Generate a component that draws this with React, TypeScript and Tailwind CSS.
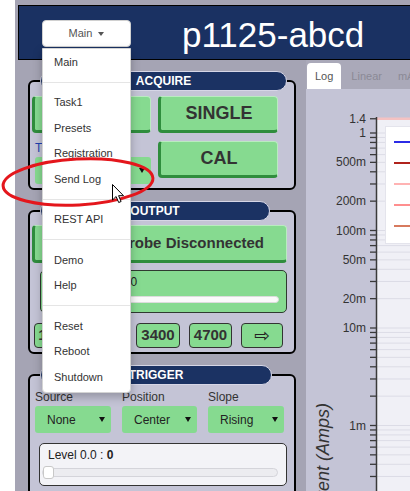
import React from "react";

function BigBtn({ children, className }: { children?: React.ReactNode; className?: string }) {
  return (
    <div
      className={`flex items-center justify-center rounded-[4px] border border-[#b9ecc0] border-l-[3px] border-b-[3px] border-l-[#2f8d3d] border-b-[#2f8d3d] bg-[#86da90] font-bold text-[#333] ${className ?? ""}`}
    >
      {children}
    </div>
  );
}

function TitleTab({ label, w }: { label: string; w: string }) {
  return (
    <div
      className={`absolute left-[10px] top-[-11px] flex h-[20px] items-center justify-center rounded-full border border-[#d6d6e6] bg-[#1b3263] text-[12px] font-bold text-white ${w}`}
    >
      {label}
    </div>
  );
}

function Caret() {
  return <span className="inline-block h-0 w-0 border-x-[3px] border-t-[5px] border-x-transparent border-t-[#111]" />;
}

function Select({ value, className }: { value: string; className?: string }) {
  return (
    <div
      className={`flex h-[27px] items-center justify-between rounded-[3px] bg-[#86da90] pl-[12px] pr-[6px] text-[12px] text-[#222] ${className ?? ""}`}
    >
      <span>{value}</span>
      <Caret />
    </div>
  );
}

function Chart() {
  const y = (v: number) => 44 - 97.5 * Math.log10(v);
  const ticks: number[] = [1.4, 1];
  for (const e of [-1, -2, -3, -4]) {
    for (let m = 9; m >= 1; m--) ticks.push(m * Math.pow(10, e));
  }
  const vis = ticks.filter((v) => y(v) <= 402);
  const labels: [number, string][] = [
    [1.4, "1.4"],
    [1, "1"],
    [0.5, "500m"],
    [0.2, "200m"],
    [0.1, "100m"],
    [0.05, "50m"],
    [0.02, "20m"],
    [0.01, "10m"],
    [0.001, "1m"],
  ];
  const legend = ["#2b2be6", "#b0231c", "#ffb3b3", "#ff8f8f", "#d77a5e"];
  return (
    <svg width={104} height={402} viewBox="0 0 104 402" className="block">
      <rect x={71} y={29} width={40} height={380} fill="#f0f0f6" />
      {vis.map((v, i) => (
        <line key={"g" + i} x1={71} x2={104} y1={y(v)} y2={y(v)} stroke="#dcdce6" strokeWidth={1} />
      ))}
      <line x1={71} x2={104} y1={y(1.4)} y2={y(1.4)} stroke="#f4c2c2" strokeWidth={2.5} />
      <rect x={79.5} y={37.5} width={30} height={117} fill="#ffffff" stroke="#e4e4ec" strokeWidth={1} />
      {legend.map((c, i) => (
        <line key={"l" + i} x1={88} x2={104} y1={53 + i * 21} y2={53 + i * 21} stroke={c} strokeWidth={2} />
      ))}
      <line x1={70.5} x2={70.5} y1={28} y2={402} stroke="#3a3a3a" strokeWidth={1.5} />
      {vis.map((v, i) => (
        <line key={"t" + i} x1={64} x2={71} y1={y(v)} y2={y(v)} stroke="#3a3a3a" strokeWidth={1.3} />
      ))}
      {labels.map(([v, t]) => (
        <text
          key={t}
          x={60}
          y={y(v)}
          textAnchor="end"
          dominantBaseline="central"
          fontSize={12}
          fill="#333"
          fontFamily="Liberation Sans, Arial, sans-serif"
        >
          {t}
        </text>
      ))}
      <text
        x={0}
        y={0}
        transform="translate(23 375.5) rotate(-90)"
        textAnchor="middle"
        fontSize={18}
        fontStyle="italic"
        fill="#333"
        fontFamily="Liberation Sans, Arial, sans-serif"
      >
        Current (Amps)
      </text>
    </svg>
  );
}

const menuGroups: string[][] = [
  ["Main"],
  ["Task1", "Presets", "Registration", "Send Log"],
  ["REST API"],
  ["Demo", "Help"],
  ["Reset", "Reboot", "Shutdown"],
];

export default function App() {
  return (
    <div className="relative flex h-[491px] w-[410px] overflow-hidden bg-white font-['Liberation_Sans',Arial,sans-serif]">
      <div className="w-[15px] shrink-0 bg-white" />
      <div className="flex min-w-0 flex-1 flex-col bg-[#a5a4b4] pt-[5px]">
        {/* header */}
        <div className="ml-[3px] flex h-[55px] w-[400px] shrink-0 items-start border border-black bg-[#1a3162]">
          <div className="ml-[23px] mt-[14px] flex h-[27px] w-[89px] items-center justify-center gap-[6px] rounded-[4px] border border-[#d0d0d0] bg-white text-[11px] text-[#555]">
            <span>Main</span>
            <span className="inline-block h-0 w-0 border-x-[3px] border-t-[4px] border-x-transparent border-t-[#555]" />
          </div>
          <div className="ml-[51px] mt-[11px] text-[35px] leading-[35px] text-white">p1125-abcd</div>
        </div>

        <div className="flex min-h-0 flex-1">
          {/* left column */}
          <div className="w-[285px] shrink-0 pl-[13px]">
            {/* ACQUIRE */}
            <div className="relative mt-[20px] h-[110px] w-[268px] rounded-[6px] border-2 border-black bg-[#c4c4d6]">
              <TitleTab label="ACQUIRE" w="w-[247px]" />
              <div className="grid grid-cols-[119px_120px] gap-x-[7px] gap-y-[8px] pl-[2px] pt-[14px]">
                <BigBtn className="h-[37px] text-[18px]">RUN</BigBtn>
                <BigBtn className="h-[37px] text-[18px]">SINGLE</BigBtn>
                <div className="pl-[3px]">
                  <div className="h-[14px] text-[12px] leading-[14px] text-[#1f3fb0]">Timebase</div>
                  <Select value="10 ms" className="mt-[2px] w-[116px]" />
                </div>
                <BigBtn className="h-[37px] text-[18px]">CAL</BigBtn>
              </div>
            </div>

            {/* OUTPUT */}
            <div className="relative mt-[20px] h-[144px] w-[268px] rounded-[6px] border-2 border-black bg-[#c4c4d6]">
              <TitleTab label="OUTPUT" w="w-[230px]" />
              <div className="pl-[2px] pt-[13px]">
                <BigBtn className="h-[38px] w-[255px] !justify-end pr-[22px] text-[15px]">Probe Disconnected</BigBtn>
              </div>
              <div className="ml-[10px] mt-[7px] h-[43px] w-[247px] rounded-[5px] border border-[#2f3a30] bg-[#86da90] pt-[4px]">
                <div className="h-[14px] pl-[7px] text-[12px] leading-[14px] text-[#222]">
                  DC Offset 0.0 : <span>0</span>
                </div>
                <div className="ml-[1px] mt-[7px] h-[7px] w-[237px] rounded-full border border-[#dcdcdc] bg-[#fafafa]" />
              </div>
              <div className="ml-[4px] mt-[10px] flex gap-[9px]">
                {["1500", "2200", "3400", "4700"].map((t, i) => (
                  <div
                    key={t}
                    className={`flex h-[25px] items-center justify-center rounded-[4px] border border-[#333] bg-[#86da90] text-[15px] font-bold text-[#333] ${i === 3 ? "w-[43px]" : i === 2 ? "w-[44px]" : "w-[42px]"}`}
                  >
                    {t}
                  </div>
                ))}
                <div className="flex h-[25px] w-[42px] items-center justify-center rounded-[4px] border border-[#333] bg-[#86da90] font-['DejaVu_Sans',sans-serif] text-[19px] leading-none text-[#222]">
                  ⇨
                </div>
              </div>
            </div>

            {/* TRIGGER */}
            <div className="relative mt-[20px] h-[140px] w-[268px] rounded-[6px] border-2 border-black bg-[#c4c4d6]">
              <TitleTab label="TRIGGER" w="w-[232px]" />
              <div className="grid grid-cols-[76px_75px_76px] gap-x-[11px] pl-[5px] pt-[14px]">
                {[
                  ["Source", "None"],
                  ["Position", "Center"],
                  ["Slope", "Rising"],
                ].map(([l, v]) => (
                  <div key={l}>
                    <div className="h-[14px] text-[12px] leading-[14px] text-[#333]">{l}</div>
                    <Select value={v} className="mt-[2px]" />
                  </div>
                ))}
              </div>
              <div className="ml-[9px] mt-[10px] h-[43px] w-[248px] rounded-[5px] border border-[#333] bg-[#f3f3f7] pt-[4px]">
                <div className="h-[14px] pl-[8px] text-[12px] leading-[14px] text-[#222]">
                  Level 0.0 : <span className="font-bold">0</span>
                </div>
                <div className="relative ml-[2px] mt-[6px] h-[9px] w-[236px] rounded-full border border-[#d4d4da] bg-[#ececf0]">
                  <div className="absolute left-[0px] top-[-3px] h-[13px] w-[11px] rounded-[3px] border border-[#c8c8c8] bg-white" />
                </div>
              </div>
            </div>
          </div>

          {/* right column */}
          <div className="ml-[6px] flex min-w-0 flex-1 flex-col">
            <div className="flex h-[29px] shrink-0 items-end gap-[2px] bg-[#aaa9b9] pl-[1px]">
              <div className="flex h-[26px] items-center rounded-t-[4px] bg-white px-[8px] text-[11px] text-[#555]">Log</div>
              <div className="flex h-[26px] items-center px-[8px] text-[11px] text-[#8a8a96]">Linear</div>
              <div className="flex h-[26px] items-center px-[6px] text-[11px] text-[#8a8a96]">mA</div>
            </div>
            <div className="flex-1 bg-[#c4c4d6]">
              <Chart />
            </div>
          </div>
        </div>
      </div>

      {/* dropdown menu */}
      <div className="absolute left-[42px] top-[48px] z-10 w-[89px] rounded-b-[4px] border border-[#d4d4d4] bg-white pb-[2px] shadow-[0_4px_10px_rgba(0,0,0,0.25)]">
        {menuGroups.map((g, gi) => (
          <div key={gi}>
            {gi > 0 && <div className="my-[7px] h-px bg-[#e5e5e5]" />}
            {g.map((it) => (
              <div key={it} className="flex h-[25.5px] items-center pl-[11px] text-[11px] text-[#333]">
                {it}
              </div>
            ))}
          </div>
        ))}
      </div>

      {/* annotation */}
      <svg className="pointer-events-none absolute left-0 top-0 z-20" width={410} height={491}>
        <ellipse cx={78} cy={182} rx={75} ry={23} transform="rotate(-3 78 182)" fill="none" stroke="#e4161c" strokeWidth={3} />
        <path
          d="M0 0 L0 15.5 L3.6 12 L6.2 18 L8.6 17 L6.1 11.2 L11 11.2 Z"
          transform="translate(112.5 184.5)"
          fill="#ffffff"
          stroke="#000"
          strokeWidth={1}
          strokeLinejoin="round"
        />
      </svg>
    </div>
  );
}
